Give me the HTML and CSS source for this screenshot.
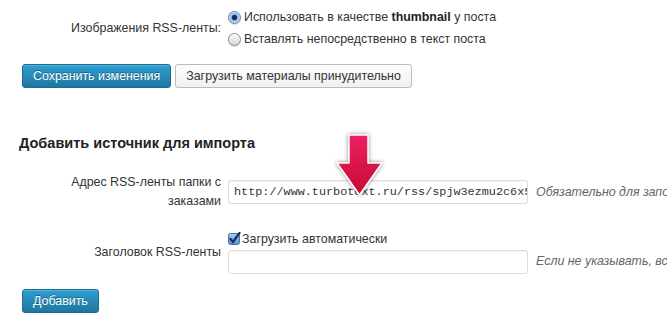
FILE: index.html
```html
<!DOCTYPE html>
<html lang="ru">
<head>
    <meta charset="UTF-8">
    <meta name="viewport" content="width=device-width, initial-scale=1.0">
    <title>Импорт RSS</title>
    <link rel="stylesheet" href="styles.css">
</head>
<body>
    <div class="form-row row-images">
        <div class="label">Изображения RSS-ленты:</div>
        <div class="field">
            <label class="choice">
                <span class="radio checked"></span>
                <span>Использовать в качестве <b>thumbnail</b> у поста</span>
            </label>
            <label class="choice">
                <span class="radio"></span>
                <span>Вставлять непосредственно в текст поста</span>
            </label>
        </div>
    </div>

    <div class="actions">
        <button class="button button-primary">Сохранить изменения</button>
        <button class="button">Загрузить материалы принудительно</button>
    </div>

    <h3 class="section-title">Добавить источник для импорта</h3>

    <div class="form-row row-url">
        <div class="label">Адрес RSS-ленты папки с заказами</div>
        <div class="field">
            <div class="field-inline">
                <input type="text" class="text-input mono" value="http://www.turbotext.ru/rss/spjw3ezmu2c6x5">
                <span class="description">Обязательно для заполнения</span>
            </div>
        </div>
    </div>

    <div class="form-row row-title">
        <div class="label">Заголовок RSS-ленты</div>
        <div class="field">
            <label class="choice check-line">
                <svg class="checkbox" width="13" height="13" viewBox="0 0 13 13">
                    <defs>
                        <linearGradient id="cb" x1="0" y1="0" x2="0" y2="1">
                            <stop offset="0" stop-color="#a9cdf2"/>
                            <stop offset="1" stop-color="#4f8fd6"/>
                        </linearGradient>
                    </defs>
                    <rect x="0.5" y="1.5" width="11" height="11" rx="2" fill="url(#cb)" stroke="#4a6f9c"/>
                    <path d="M2.5 7 L5 10 L11.5 1" fill="none" stroke="#1c2e4d" stroke-width="2.2" stroke-linecap="round"/>
                </svg>
                <span>Загрузить автоматически</span>
            </label>
            <div class="field-inline">
                <input type="text" class="text-input" value="">
                <span class="description">Если не указывать, вст…</span>
            </div>
        </div>
    </div>

    <div class="actions actions-add">
        <button class="button button-primary">Добавить</button>
    </div>

    <svg class="pointer" width="50" height="68" viewBox="0 0 50 68">
        <defs>
            <linearGradient id="arrow" x1="0" y1="0" x2="0" y2="1">
                <stop offset="0" stop-color="#ec1f63"/>
                <stop offset="1" stop-color="#c70b30"/>
            </linearGradient>
        </defs>
        <path d="M14 4 H33 V32 H47 L24.5 64 L2 32 H14 Z" fill="url(#arrow)" stroke="#fff" stroke-width="1.5" stroke-linejoin="round"/>
    </svg>
</body>
</html>
```

FILE: styles.css
```css
body {
    margin: 0;
    padding: 6px 0 0 19px;
    font-family: "Liberation Sans", Arial, sans-serif;
    font-size: 12.4px;
    color: #333;
    background: #fff;
    overflow: hidden;
    position: relative;
    height: 332px;
    box-sizing: border-box;
}
.form-row {
    display: flex;
    align-items: center;
}
.label {
    width: 202px;
    flex-shrink: 0;
    text-align: right;
    line-height: 19px;
}
.field {
    margin-left: 7px;
    display: flex;
    flex-direction: column;
    flex-shrink: 0;
}
.field-inline {
    display: flex;
    flex-direction: row;
    align-items: center;
    white-space: nowrap;
}
.choice {
    display: flex;
    align-items: center;
    height: 22px;
    white-space: nowrap;
}
.choice b {
    color: #222;
}
.radio {
    width: 11px;
    height: 11px;
    border: 1px solid #8d8d8d;
    border-radius: 50%;
    margin-right: 3px;
    background: linear-gradient(#fdfdfd, #d6d6d6);
    box-shadow: 0 1px 1px rgba(0,0,0,0.15);
}
.radio.checked {
    border-color: #6a7f9a;
    background: radial-gradient(circle, #16305c 0, #16305c 2.2px, #7fb0e6 3px, #d9e9f9 6px);
}
.check-line {
    height: 16px;
}
.checkbox {
    margin: -2px 1px 0 0;
}
.actions {
    margin: 14px 0 0 3px;
    display: flex;
    gap: 4px;
}
.button {
    font-family: "Liberation Sans", Arial, sans-serif;
    font-size: 12.4px;
    height: 24px;
    padding: 0 10px;
    border-radius: 3px;
    border: 1px solid #bbb;
    background: linear-gradient(#fefefe, #f0f0f0);
    color: #333;
    cursor: pointer;
}
.button-primary {
    border-color: #1f6b8f;
    background: linear-gradient(#2e9fd2, #1f76a0);
    color: #fff;
    text-shadow: 0 -1px 0 rgba(0,0,0,0.35);
    box-shadow: inset 0 1px 0 rgba(120,200,230,0.5);
    padding: 0 10px;
}
.section-title {
    margin: 45px 0 0 0;
    font-size: 14.5px;
    line-height: 20px;
    color: #222;
}
.row-url {
    margin-top: 20px;
}
.row-title {
    margin-top: 20px;
}
.text-input {
    width: 300px;
    height: 24px;
    box-sizing: border-box;
    border: 1px solid #dcdcdc;
    border-radius: 3px;
    padding: 0 0 0 5px;
    font-family: "Liberation Sans", Arial, sans-serif;
    font-size: 12.4px;
    color: #333;
    background: #fff;
    box-shadow: inset 0 1px 1px rgba(0,0,0,0.04);
}
.row-title .text-input {
    margin-top: 3px;
}
.mono {
    font-family: "Liberation Mono", "Courier New", monospace;
    font-size: 11.8px;
}
.description {
    margin-left: 8px;
    font-style: italic;
    color: #666;
}
.actions-add {
    margin-top: 15px;
}
.pointer {
    position: absolute;
    left: 335px;
    top: 131px;
    filter: drop-shadow(0 0 2px rgba(0,0,0,0.45));
}
```
